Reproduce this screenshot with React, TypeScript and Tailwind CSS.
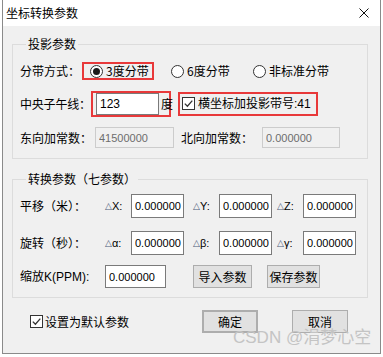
const cjk = "font-['Noto_Sans_CJK_SC','Noto_Sans',sans-serif]";
const num = "font-['Liberation_Sans','Noto_Sans_CJK_SC',sans-serif]";

function Radio({ checked }: { checked?: boolean }) {
  return (
    <span className="flex h-[13px] w-[13px] shrink-0 items-center justify-center rounded-full border border-[#333] bg-white">
      {checked && <span className="h-[7px] w-[7px] rounded-full bg-[#1a1a1a]" />}
    </span>
  );
}

function Check() {
  return (
    <span className="flex h-[13px] w-[13px] shrink-0 items-center justify-center border border-[#333] bg-white">
      <svg width="11" height="11" viewBox="0 0 11 11">
        <path d="M1.8 5.6 L4.4 8.2 L9.3 2.6" fill="none" stroke="#333" strokeWidth="1.3" />
      </svg>
    </span>
  );
}

function Box({ value, className = '', disabled }: { value: string; className?: string; disabled?: boolean }) {
  const look = disabled
    ? 'border-[#cccccc] bg-[#f0f0f0] text-[#6d6d6d]'
    : 'border-[#7a7a7a] bg-white text-black';
  return (
    <input
      readOnly
      disabled={disabled}
      value={value}
      className={`${num} ${look} ${className} border pl-[3px] text-[11px] outline-none`}
    />
  );
}

function Delta({ sym, className = '' }: { sym: string; className?: string }) {
  return (
    <span className={`flex w-[26px] shrink-0 items-center ${className}`}>
      <span className="font-['DejaVu_Sans',sans-serif] text-[9px] text-[#4a5a78]">△</span>
      <span className={`${num} text-[11px]`}>{sym}:</span>
    </span>
  );
}

function Button({ label, className = '' }: { label: string; className?: string }) {
  return (
    <button className={`flex h-[23px] items-center justify-center border border-[#adadad] bg-[#e1e1e1] leading-[16px] ${className}`}>
      {label}
    </button>
  );
}

export default function App() {
  const red = 'border-2 border-[#e8393a]';
  return (
    <div className={`h-[357px] w-[383px] overflow-hidden bg-white ${cjk} text-[12px] leading-[16px] whitespace-nowrap text-black`}>
      <div className="relative ml-[2px] flex h-[354px] w-[379px] flex-col border-x border-b border-[#8a8a8a]">
        {/* title bar */}
        <div className="flex h-[26px] shrink-0 items-center justify-between bg-white pl-[3px] pr-[11px]">
          <span>坐标转换参数</span>
          <svg width="10" height="10" viewBox="0 0 10 10">
            <path d="M0.5 0.5 L9.5 9.5 M9.5 0.5 L0.5 9.5" stroke="#111" strokeWidth="1" />
          </svg>
        </div>

        <div className="flex-1 bg-[#f0f0f0] pt-[10px]">
          <fieldset className="mr-[12px] ml-[9px] border border-[#dcdcdc] pb-[10px] pl-[7px]">
            <legend className="ml-[6px] px-[2px] leading-[16px]">投影参数</legend>

            <div className="mt-[8px] flex h-[22px] items-center">
              <span className="w-[62px] shrink-0">分带方式：</span>
              <label className={`flex h-[18px] w-[72px] items-center pl-[6px] ${red}`}>
                <Radio checked />
                <span className="ml-[3px]">3度分带</span>
              </label>
              <label className="ml-[17px] flex w-[82px] items-center">
                <Radio />
                <span className="ml-[3px]">6度分带</span>
              </label>
              <label className="flex items-center">
                <Radio />
                <span className="ml-[3px]">非标准分带</span>
              </label>
            </div>

            <div className="mt-[8px] flex h-[27px] items-center">
              <span className="w-[71px] shrink-0 tracking-[-0.2px]">中央子午线：</span>
              <div className={`flex h-[26px] w-[80px] shrink-0 items-center pl-[3px] ${red}`}>
                <Box value="123" className="h-[22px] w-[63px] text-[12px]" />
                <span className="ml-[2px]">度</span>
              </div>
              <label className={`ml-[7px] flex h-[24px] w-[140px] items-center pl-[2px] ${red}`}>
                <Check />
                <span className="ml-[3px]">
                  横坐标加投影带号<span className={`${num} text-[12px]`}>:41</span>
                </span>
              </label>
            </div>

            <div className="mt-[10px] flex h-[21px] items-center">
              <span className="w-[75px] shrink-0">东向加常数：</span>
              <Box value="41500000" disabled className="h-[21px] w-[79px]" />
              <span className="ml-[7px] w-[81px] shrink-0">北向加常数：</span>
              <Box value="0.000000" disabled className="h-[21px] w-[78px]" />
            </div>
          </fieldset>

          <fieldset className="mt-[12px] mr-[12px] ml-[9px] border border-[#dcdcdc] pb-[9px] pl-[7px]">
            <legend className="ml-[6px] px-[2px] leading-[16px]">转换参数（七参数）</legend>

            <div className="mt-[7px] flex h-[24px] items-center">
              <span className="w-[85px] shrink-0">平移（米）：</span>
              <Delta sym="X" />
              <Box value="0.000000" className="h-[24px] w-[53px]" />
              <Delta sym="Y" className="ml-[9px]" />
              <Box value="0.000000" className="h-[24px] w-[53px]" />
              <Delta sym="Z" className="ml-[5px]" />
              <Box value="0.000000" className="h-[24px] w-[53px]" />
            </div>

            <div className="mt-[13px] flex h-[24px] items-center">
              <span className="w-[85px] shrink-0">旋转（秒）：</span>
              <Delta sym="α" />
              <Box value="0.000000" className="h-[24px] w-[53px]" />
              <Delta sym="β" className="ml-[9px]" />
              <Box value="0.000000" className="h-[24px] w-[53px]" />
              <Delta sym="γ" className="ml-[5px]" />
              <Box value="0.000000" className="h-[24px] w-[53px]" />
            </div>

            <div className="mt-[10px] flex h-[23px] items-center">
              <span className="w-[85px] shrink-0">
                缩放<span className={`${num} text-[12px]`}>K(PPM):</span>
              </span>
              <Box value="0.000000" className="h-[23px] w-[61px]" />
              <Button label="导入参数" className="ml-[27px] w-[59px]" />
              <Button label="保存参数" className="ml-[15px] w-[53px]" />
            </div>
          </fieldset>

          <div className="mt-[12px] flex h-[23px] items-center">
            <label className="ml-[27px] flex w-[172px] items-center">
              <Check />
              <span className="ml-[2px]">设置为默认参数</span>
            </label>
            <Button label="确定" className="w-[56px] border-2 border-[#0078d7]" />
            <Button label="取消" className="ml-[34px] w-[56px]" />
          </div>
        </div>

        {/* watermark */}
        <span className={`pointer-events-none absolute top-[329px] left-[230px] ${num} text-[17px] leading-[18px] text-[#c4c4c4]`}>
          CSDN @涓梦心空
        </span>
      </div>
    </div>
  );
}
